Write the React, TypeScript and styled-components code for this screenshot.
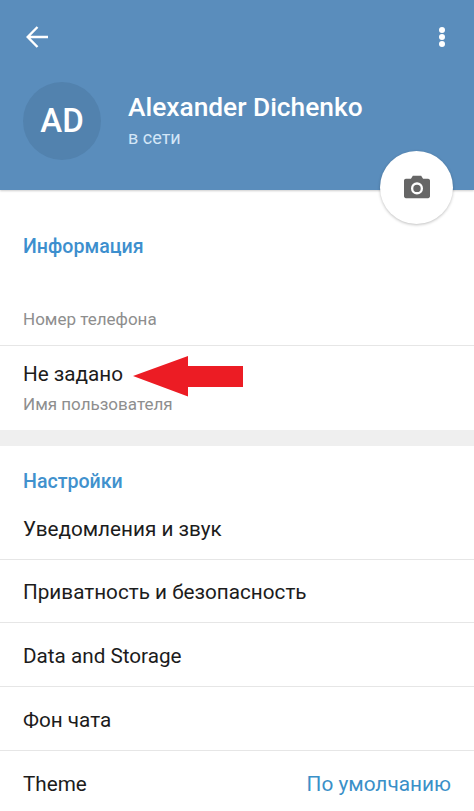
import styled, { createGlobalStyle } from "styled-components";

const GlobalStyle = createGlobalStyle`
  html, body {
    margin: 0;
    padding: 0;
    background: #fff;
    font-family: Roboto, "Liberation Sans", sans-serif;
  }
  body {
    width: 474px;
    height: 811px;
    overflow: hidden;
  }
`

const Page = styled.div`
  width: 474px;
  height: 811px;
  overflow: hidden;
  background: #fff;
`
const Header = styled.header`
  position: relative;
  height: 190px;
  box-sizing: border-box;
  padding: 24px 28px 0 23px;
  background: #5a8dbc;
  box-shadow: 0 1px 2px rgba(0, 0, 0, 0.2);
`
const TopBar = styled.div`
  display: flex;
  align-items: center;
  justify-content: space-between;
  height: 26px;
  margin-bottom: 32px;
  padding-left: 3px;
`
const Profile = styled.div`
  display: flex;
  align-items: center;
  gap: 27px;
`
const Avatar = styled.div`
  width: 78px;
  height: 78px;
  border-radius: 50%;
  background: #5282ae;
  color: #fff;
  display: flex;
  align-items: center;
  justify-content: center;
  font-size: 33px;
  font-weight: 500;
  padding-bottom: 1px;
  box-sizing: border-box;
`
const ProfileText = styled.div`
  display: flex;
  flex-direction: column;
  margin-top: -1px;
`
const Name = styled.div`
  color: #fff;
  font-size: 26.3px;
  font-weight: 500;
  line-height: 32px;
  margin-bottom: 3px;
`
const Status = styled.div`
  color: #d3e6f7;
  font-size: 18px;
  line-height: 24px;
`
const CameraButton = styled.div`
  position: absolute;
  left: 380px;
  top: 151px;
  width: 73px;
  height: 73px;
  border-radius: 50%;
  background: #fff;
  box-shadow: 0 1px 3px rgba(0, 0, 0, 0.25);
  display: flex;
  align-items: center;
  justify-content: center;
  padding-bottom: 1px;
  box-sizing: border-box;
`
const InfoSection = styled.section`
  background: #fff;
  box-shadow: 0 1px 2px rgba(0, 0, 0, 0.14);
`
const InfoTitle = styled.div`
  height: 112px;
  box-sizing: border-box;
  padding-left: 23px;
  display: flex;
  align-items: center;
  color: #3d8fce;
  font-size: 19.6px;
  font-weight: 500;
`
const SettingsTitle = styled(InfoTitle)`
  height: 50px;
  padding-top: 20px;
  color: #4191cd;
`
const Hint = styled.div`
  padding-left: 23px;
  color: #8e8e8e;
  font-size: 17px;
  line-height: 20px;
`
const PhoneRow = styled.div`
  height: 44px;
  padding-top: 7px;
  box-sizing: border-box;
  border-bottom: 1px solid #e6e6e6;
`
const UsernameRow = styled.div`
  position: relative;
  height: 84px;
  box-sizing: border-box;
  padding-top: 14px;
`
const Value = styled.div`
  padding-left: 23px;
  color: #1c1c1c;
  font-size: 20.7px;
  line-height: 28px;
  margin-bottom: 6px;
`
const RedArrow = styled.svg`
  position: absolute;
  left: 133px;
  top: 10px;
`
const Band = styled.div`
  height: 16px;
  background: #efefef;
`
const SettingsSection = styled.section`
  background: #fff;
`
const SettingRow = styled.div<{ $last?: boolean }>`
  height: 63.67px;
  box-sizing: border-box;
  padding: 3px 23px 0 23px;
  display: flex;
  align-items: center;
  justify-content: space-between;
  color: #1c1c1c;
  font-size: 20.7px;
  border-bottom: ${(p) => (p.$last ? "none" : "1px solid #e6e6e6")};
`
const SettingValue = styled.span`
  color: #3a90c8;
  font-size: 20.8px;
`

const settings = ["Уведомления и звук", "Приватность и безопасность", "Data and Storage", "Фон чата"];

export default function App() {
  return (
    <Page>
      <GlobalStyle />
      <Header>
        <TopBar>
          <svg width="22" height="22" viewBox="0 0 22 22" fill="none" stroke="#fff" strokeWidth="2.4">
            <path d="M22 11H2.5M11.5 1L1.7 11L11.5 21" />
          </svg>
          <svg width="8" height="22" viewBox="0 0 8 22" fill="#fff">
            <circle cx="4" cy="4" r="3" />
            <circle cx="4" cy="11" r="3" />
            <circle cx="4" cy="18" r="3" />
          </svg>
        </TopBar>
        <Profile>
          <Avatar>AD</Avatar>
          <ProfileText>
            <Name>Alexander Dichenko</Name>
            <Status>в сети</Status>
          </ProfileText>
        </Profile>
        <CameraButton>
          <svg width="26" height="24" viewBox="0 0 28 25">
            <path
              fill="#666"
              fillRule="evenodd"
              d="M9.5 0.5H18.5L20.5 3.5H26C27 3.5 28 4.5 28 5.5V22.5C28 23.5 27 24.5 26 24.5H2C1 24.5 0 23.5 0 22.5V5.5C0 4.5 1 3.5 2 3.5H7.5ZM14 7.5A6.5 6.5 0 1 0 14 20.5A6.5 6.5 0 1 0 14 7.5ZM14 10A4 4 0 1 1 14 18A4 4 0 1 1 14 10Z"
            />
          </svg>
        </CameraButton>
      </Header>
      <InfoSection>
        <InfoTitle>Информация</InfoTitle>
        <PhoneRow>
          <Hint>Номер телефона</Hint>
        </PhoneRow>
        <UsernameRow>
          <Value>Не задано</Value>
          <Hint>Имя пользователя</Hint>
          <RedArrow width="110" height="41" viewBox="0 0 110 41">
            <path fill="#ec1c24" d="M0 20L55 0V10H110V31H55V40.5Z" />
          </RedArrow>
        </UsernameRow>
      </InfoSection>
      <Band />
      <SettingsSection>
        <SettingsTitle>Настройки</SettingsTitle>
        {settings.map((s) => (
          <SettingRow key={s}>{s}</SettingRow>
        ))}
        <SettingRow $last>
          Theme
          <SettingValue>По умолчанию</SettingValue>
        </SettingRow>
      </SettingsSection>
    </Page>
  );
}
